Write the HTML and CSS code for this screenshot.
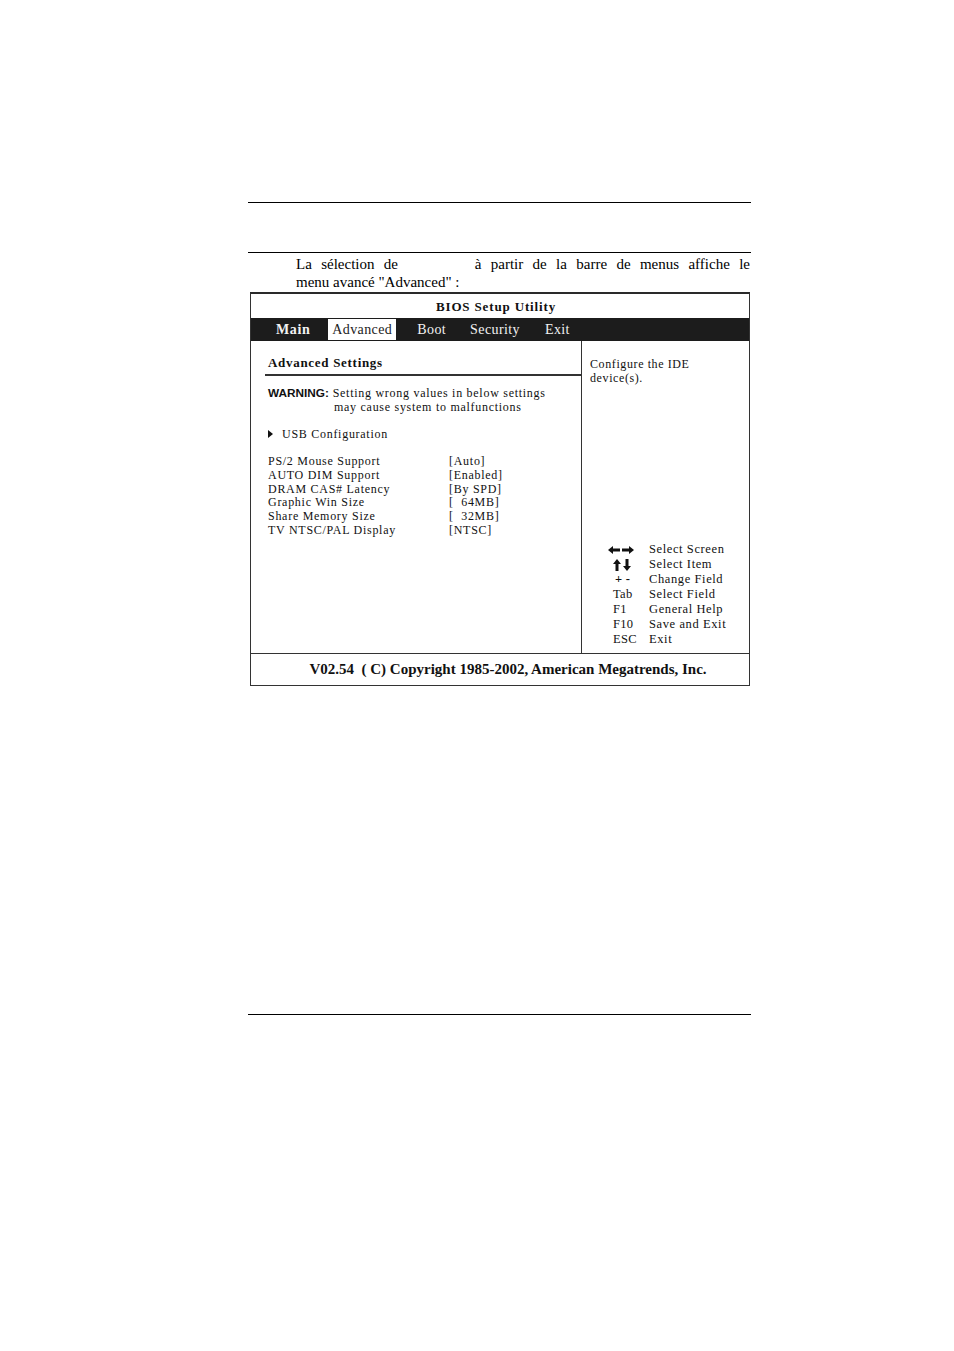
FILE: index.html
```html
<!DOCTYPE html>
<html lang="fr">
<head>
<meta charset="utf-8">
<title>BIOS Advanced</title>
<link rel="stylesheet" href="styles.css">
</head>
<body>
<div class="page">
  <div class="rule rule-top"></div>
  <div class="rule rule-second"></div>
  <div class="intro">
    <div class="line1">La sélection de <span class="gap"></span> à partir de la barre de menus affiche le</div>
    <div>menu avancé "Advanced" :</div>
  </div>

  <div class="bios">
    <div class="bios-title">BIOS Setup Utility</div>
    <div class="menubar">
      <span class="menu-item main">Main</span>
      <span class="menu-item active">Advanced</span>
      <span class="menu-item boot">Boot</span>
      <span class="menu-item security">Security</span>
      <span class="menu-item exit">Exit</span>
    </div>
    <div class="content">
      <div class="left">
        <div class="heading">Advanced Settings</div>
        <div class="warning">
          <div><span class="warn-label">WARNING:</span> Setting wrong values in below settings</div>
          <div class="warn-indent">may cause system to malfunctions</div>
        </div>
        <div class="submenu"><span class="tri"></span>USB Configuration</div>
        <div class="items">
          <span>PS/2 Mouse Support</span><span>[Auto]</span>
          <span>AUTO DIM Support</span><span>[Enabled]</span>
          <span>DRAM CAS# Latency</span><span>[By SPD]</span>
          <span>Graphic Win Size</span><span class="pre">[  64MB]</span>
          <span>Share Memory Size</span><span class="pre">[  32MB]</span>
          <span>TV NTSC/PAL Display</span><span>[NTSC]</span>
        </div>
      </div>
      <div class="right">
        <div class="help">Configure the IDE<br>device(s).</div>
        <div class="keys">
          <span class="key arrow-lr"><svg width="27" height="8" viewBox="0 0 27 8"><polygon points="0,4 5,0 5,2.6 12,2.6 12,5.4 5,5.4 5,8" fill="#111"/><polygon points="26,4 21,0 21,2.6 14,2.6 14,5.4 21,5.4 21,8" fill="#111"/></svg></span><span>Select Screen</span>
          <span class="key arrow-ud"><svg width="20" height="12" viewBox="0 0 20 12"><polygon points="5,0 9,5 6.5,5 6.5,12 3.5,12 3.5,5 1,5" fill="#111"/><polygon points="15,12 19,7 16.5,7 16.5,0 13.5,0 13.5,7 11,7" fill="#111"/></svg></span><span>Select Item</span>
          <span class="key plus">+ -</span><span>Change Field</span>
          <span class="key">Tab</span><span>Select Field</span>
          <span class="key">F1</span><span>General Help</span>
          <span class="key">F10</span><span>Save and Exit</span>
          <span class="key">ESC</span><span>Exit</span>
        </div>
      </div>
    </div>
    <div class="footer">V02.54&nbsp; ( C) Copyright 1985-2002, American Megatrends, Inc.</div>
  </div>

  <div class="rule rule-bottom"></div>
</div>
</body>
</html>
```

FILE: styles.css
```css
html, body {
  margin: 0;
  padding: 0;
  background: #fff;
}

body {
  font-family: "Liberation Serif", "Times New Roman", serif;
  color: #111;
}

.page {
  width: 503px;
  margin-left: 248px;
  padding-top: 202px;
}

.rule {
  height: 1px;
  background: #000;
}

.rule-second {
  margin-top: 49px;
}

.intro {
  margin: 2px 0 0 0;
  padding-left: 48px;
  padding-right: 1px;
  font-size: 15px;
  line-height: 18px;
  color: #000;
}

.line1 {
  text-align: justify;
  text-align-last: justify;
}

.gap {
  display: inline-block;
  width: 58px;
}

.bios {
  margin: 1px 0 0 2px;
  width: 498px;
  border-top: 2px solid #2a2a2a;
  border-left: 1px solid #333;
  border-right: 1px solid #333;
  border-bottom: 1px solid #333;
}

.bios-title {
  height: 24px;
  line-height: 25px;
  text-align: center;
  font-weight: bold;
  font-size: 13px;
  letter-spacing: 0.85px;
  padding-right: 8px;
}

.menubar {
  height: 23px;
  background: #1c1c1c;
  display: flex;
  align-items: stretch;
  font-size: 14px;
  letter-spacing: 0.4px;
  color: #f2f2f2;
}

.menu-item {
  display: flex;
  align-items: center;
}

.main {
  margin-left: 25px;
  font-weight: bold;
  letter-spacing: 0.6px;
}

.active {
  margin-left: 18px;
  margin-top: 1px;
  margin-bottom: 1px;
  background: #fff;
  color: #222;
  padding: 0 4px 0 4px;
}

.boot {
  margin-left: 21px;
}

.security {
  margin-left: 24px;
}

.exit {
  margin-left: 25px;
}

.content {
  height: 312px;
  display: flex;
  border-bottom: 1px solid #333;
}

.left {
  width: 330px;
  border-right: 1px solid #333;
  padding-top: 13px;
  font-size: 12px;
  letter-spacing: 0.72px;
}

.heading {
  margin-left: 14px;
  padding-left: 3px;
  height: 16px;
  line-height: 17px;
  padding-bottom: 4px;
  border-bottom: 2px solid #333;
  font-weight: bold;
  font-size: 13px;
  letter-spacing: 0.7px;
}

.warning {
  margin-top: 10px;
  padding-left: 17px;
  line-height: 14px;
}

.warn-label {
  font-family: "Liberation Sans", Arial, sans-serif;
  font-weight: bold;
  font-size: 11.8px;
  letter-spacing: 0;
}

.warn-indent {
  padding-left: 66px;
}

.submenu {
  margin-top: 13px;
  padding-left: 17px;
  line-height: 14px;
  display: flex;
  align-items: center;
}

.tri {
  display: inline-block;
  width: 0;
  height: 0;
  border-top: 4px solid transparent;
  border-bottom: 4px solid transparent;
  border-left: 5px solid #111;
  margin-right: 9px;
}

.items {
  margin-top: 14px;
  padding-left: 17px;
  display: grid;
  grid-template-columns: 181px auto;
  grid-auto-rows: 13.8px;
  line-height: 13.8px;
}

.pre {
  white-space: pre;
}

.right {
  flex: 1;
  display: flex;
  flex-direction: column;
  padding: 16px 0 6px 8px;
  font-size: 12px;
  letter-spacing: 0.6px;
}

.help {
  line-height: 14px;
}

.keys {
  margin-top: auto;
  display: grid;
  grid-template-columns: 36px auto;
  grid-auto-rows: 15px;
  line-height: 15px;
  margin-left: 23px;
  font-size: 12.5px;
}

.key {
  display: flex;
  align-items: center;
  letter-spacing: 0.3px;
}

.arrow-lr {
  margin-left: -5px;
}

.arrow-ud {
  margin-left: -1px;
}

.plus {
  padding-left: 2px;
  font-weight: bold;
}

.key svg {
  display: block;
}

.footer {
  height: 31px;
  line-height: 31px;
  text-align: center;
  font-weight: bold;
  font-size: 15px;
  padding-left: 16px;
}

.rule-bottom {
  margin-top: 328px;
}
```
